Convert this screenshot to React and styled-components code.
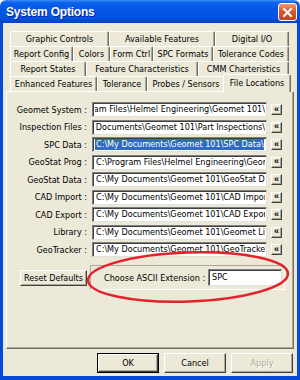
import React from 'react'
import styled, { createGlobalStyle } from 'styled-components'

const GlobalStyle = createGlobalStyle`
  html, body { margin: 0; padding: 0; background: #fff; }
  * { box-sizing: border-box; }
`

const UI_FONT = `"DejaVu Sans Condensed", "Liberation Sans", Arial, sans-serif`

const Window = styled.div`
  position: relative;
  width: 300px;
  height: 380px;
  display: flex;
  flex-direction: column;
  font-family: ${UI_FONT};
  font-size: 9px;
  color: #000;
  overflow: hidden;
`

const TitleBar = styled.div`
  height: 23px;
  flex: none;
  display: flex;
  align-items: center;
  justify-content: space-between;
  padding: 0 3px 0 6px;
  border-radius: 6px 6px 0 0;
  background: linear-gradient(#3d8df9 0%, #0b61ea 12%, #0457e5 45%, #0352e0 80%, #0141c4 100%);
`

const Title = styled.span`
  color: #fff;
  font-family: "Liberation Sans", Arial, sans-serif;
  font-weight: 700;
  font-size: 12px;
  letter-spacing: -0.2px;
  text-shadow: 1px 1px 0 #0a1e8a;
`

const CloseBtn = styled.div`
  width: 19px;
  height: 18px;
  margin-top: 1px;
  border: 1px solid #fff;
  border-radius: 3px;
  background: linear-gradient(#f09a78, #d9582c 45%, #c4441a);
  display: flex;
  align-items: center;
  justify-content: center;
`

const Body = styled.div`
  flex: 1;
  display: flex;
  flex-direction: column;
  background: #ece9d8;
  border: 3px solid #0848d6;
  border-top: none;
  border-bottom-width: 4px;
  padding: 8px 3px 3px 3px;
`

const TabStrip = styled.div`
  display: flex;
  flex-direction: column;
  padding-left: 4px;
  position: relative;
  z-index: 2;
`

const TabRow = styled.div`
  display: flex;
  height: 15px;
  align-items: flex-end;
`

const Tab = styled.div`
  width: ${p => (p.$active ? p.$w + 4 : p.$w)}px;
  height: ${p => (p.$active ? 18 : 15)}px;
  margin-left: ${p => (p.$active ? -2 : 0)}px;
  margin-bottom: ${p => (p.$active ? -1 : 0)}px;
  flex: none;
  display: flex;
  align-items: center;
  justify-content: center;
  white-space: nowrap;
  background: #ece9d8;
  border-top: 1px solid #fff;
  border-left: 1px solid #fff;
  border-right: 1px solid #716f64;
  box-shadow: inset -1px 0 0 #aca899;
  border-radius: 2px 2px 0 0;
  padding-bottom: ${p => (p.$active ? 2 : 0)}px;
`

const Panel = styled.div`
  flex: 1;
  display: flex;
  flex-direction: column;
  background: #ece9d8;
  border-top: 1px solid #fff;
  border-left: 1px solid #fff;
  border-right: 1px solid #716f64;
  border-bottom: 1px solid #716f64;
  box-shadow: inset -1px -1px 0 #aca899;
  padding-top: 10px;
`

const FieldGrid = styled.div`
  display: grid;
  grid-template-columns: 81px 175px 11px;
  column-gap: 4px;
  row-gap: 2.5px;
  grid-auto-rows: 15px;
  align-items: center;
`

const Label = styled.div`
  text-align: right;
  white-space: nowrap;
  margin-right: 1px;
`

const Field = styled.div`
  height: ${p => p.$h || 15}px;
  width: ${p => (p.$w ? `${p.$w}px` : 'auto')};
  background: #fff;
  border-top: 1px solid #7f7f7f;
  border-left: 1px solid #7f7f7f;
  border-right: 1px solid #e4e2d6;
  border-bottom: 1px solid #e4e2d6;
  box-shadow: inset 1px 1px 0 #404040;
  display: flex;
  align-items: center;
  overflow: hidden;
  padding: 0 1px 0 2px;
`

// rtl box keeps the tail of a long path in view, like a scrolled edit box
const FieldText = styled.span`
  display: block;
  flex: 0 1 auto;
  min-width: 0;
  overflow: hidden;
  white-space: nowrap;
  direction: ${p => (p.$end ? 'rtl' : 'ltr')};
  line-height: 11px;
  padding-left: 1px;
  background: ${p => (p.$selected ? '#316ac5' : 'transparent')};
  color: ${p => (p.$selected ? '#fff' : '#000')};
`

const Ltr = styled.span`
  direction: ltr;
  unicode-bidi: isolate;
`

const BrowseBtn = styled.div`
  width: 11px;
  height: 11px;
  background: #ece9d8;
  border-top: 1px solid #fff;
  border-left: 1px solid #fff;
  border-right: 1px solid #404040;
  border-bottom: 1px solid #404040;
  box-shadow: inset -1px -1px 0 #aca899;
  display: flex;
  align-items: center;
  justify-content: center;
  font-family: "Liberation Sans", Arial, sans-serif;
  font-weight: 700;
  font-size: 9px;
  line-height: 9px;
  padding-bottom: 1px;
`

const BottomRow = styled.div`
  display: flex;
  align-items: center;
  gap: 3px;
  margin-top: 8px;
  padding-left: 13px;
`

const Button = styled.div`
  width: ${p => p.$w}px;
  height: ${p => p.$h}px;
  flex: none;
  display: flex;
  align-items: center;
  justify-content: center;
  white-space: nowrap;
  background: #ece9d8;
  color: ${p => (p.$disabled ? '#aca899' : '#000')};
  text-shadow: ${p => (p.$disabled ? '1px 1px 0 #fff' : 'none')};
  border-top: 1px solid #fff;
  border-left: 1px solid #fff;
  border-right: 1px solid #404040;
  border-bottom: 1px solid #404040;
  box-shadow: inset -1px -1px 0 #aca899${p => (p.$default ? ', 0 0 0 1px #000' : '')};
  margin: ${p => (p.$default ? '1px' : '0')};
`

const ExtFrame = styled.div`
  width: 195px;
  height: 25px;
  display: flex;
  align-items: center;
  padding-left: 13px;
  border-top: 1px solid #aca899;
  border-left: 1px solid #aca899;
  border-right: 1px solid #fff;
  border-bottom: 1px solid #fff;
`

const ExtLabel = styled.span`
  white-space: nowrap;
  width: 104px;
  flex: none;
`

const ButtonRow = styled.div`
  display: flex;
  justify-content: flex-end;
  gap: 5px;
  margin-top: 4px;
  padding-right: 1px;
  height: 20px;
  align-items: center;
`

const Overlay = styled.svg`
  position: absolute;
  left: 0;
  top: 0;
  pointer-events: none;
`

const tabRows = [
  [['Graphic Controls', 99], ['Available Features', 106], ['Digital I/O', 74]],
  [['Report Config', 63], ['Colors', 37], ['Form Ctrl', 43], ['SPC Formats', 60], ['Tolerance Codes', 76]],
  [['Report States', 76], ['Feature Characteristics', 112], ['CMM Charteristics', 91]],
  [['Enhanced Features', 87], ['Tolerance', 50], ['Probes / Sensors', 78], ['File Locations', 64, true]],
]

const paths = [
  { label: 'Geomet System :', value: 'C:\\Program Files\\Helmel Engineering\\Geomet 101\\', end: true },
  { label: 'Inspection Files :', value: 'C:\\My Documents\\Geomet 101\\Part Inspections\\', end: true },
  { label: 'SPC Data :', value: 'C:\\My Documents\\Geomet 101\\SPC Data\\', selected: true },
  { label: 'GeoStat Prog :', value: 'C:\\Program Files\\Helmel Engineering\\Geomet 101\\GeoStat\\' },
  { label: 'GeoStat Data :', value: 'C:\\My Documents\\Geomet 101\\GeoStat Data\\' },
  { label: 'CAD Import :', value: 'C:\\My Documents\\Geomet 101\\CAD Import\\' },
  { label: 'CAD Export :', value: 'C:\\My Documents\\Geomet 101\\CAD Export\\' },
  { label: 'Library :', value: 'C:\\My Documents\\Geomet 101\\Geomet Library\\' },
  { label: 'GeoTracker :', value: 'C:\\My Documents\\Geomet 101\\GeoTracker\\' },
]

export default function App() {
  return (
    <>
      <GlobalStyle />
      <Window>
        <TitleBar>
          <Title>System Options</Title>
          <CloseBtn>
            <svg width="11" height="11" viewBox="0 0 11 11">
              <path d="M2 2 L9 9 M9 2 L2 9" stroke="#fff" strokeWidth="2" strokeLinecap="square" />
            </svg>
          </CloseBtn>
        </TitleBar>
        <Body>
          <TabStrip>
            {tabRows.map((row, i) => (
              <TabRow key={i}>
                {row.map(([name, w, active]) => (
                  <Tab key={name} $w={w} $active={active}>{name}</Tab>
                ))}
              </TabRow>
            ))}
          </TabStrip>
          <Panel>
            <FieldGrid>
              {paths.map(p => (
                <React.Fragment key={p.label}>
                  <Label>{p.label}</Label>
                  <Field>
                    <FieldText $selected={p.selected} $end={p.end}>
                      <Ltr>{p.value}</Ltr>
                    </FieldText>
                  </Field>
                  <BrowseBtn>«</BrowseBtn>
                </React.Fragment>
              ))}
            </FieldGrid>
            <BottomRow>
              <Button $w={67} $h={16}>Reset Defaults</Button>
              <ExtFrame>
                <ExtLabel>Choose ASCII Extension :</ExtLabel>
                <Field $w={74} $h={17}>
                  <FieldText>SPC</FieldText>
                </Field>
              </ExtFrame>
            </BottomRow>
          </Panel>
          <ButtonRow>
            <Button $w={60} $h={18} $default>OK</Button>
            <Button $w={62} $h={20}>Cancel</Button>
            <Button $w={62} $h={20} $disabled>Apply</Button>
          </ButtonRow>
        </Body>
        <Overlay width="300" height="380" viewBox="0 0 300 380">
          <ellipse cx="188" cy="277" rx="100" ry="24.5" fill="none" stroke="#e3222c" strokeWidth="2.5" transform="rotate(-2 188 277)" />
        </Overlay>
      </Window>
    </>
  )
}
